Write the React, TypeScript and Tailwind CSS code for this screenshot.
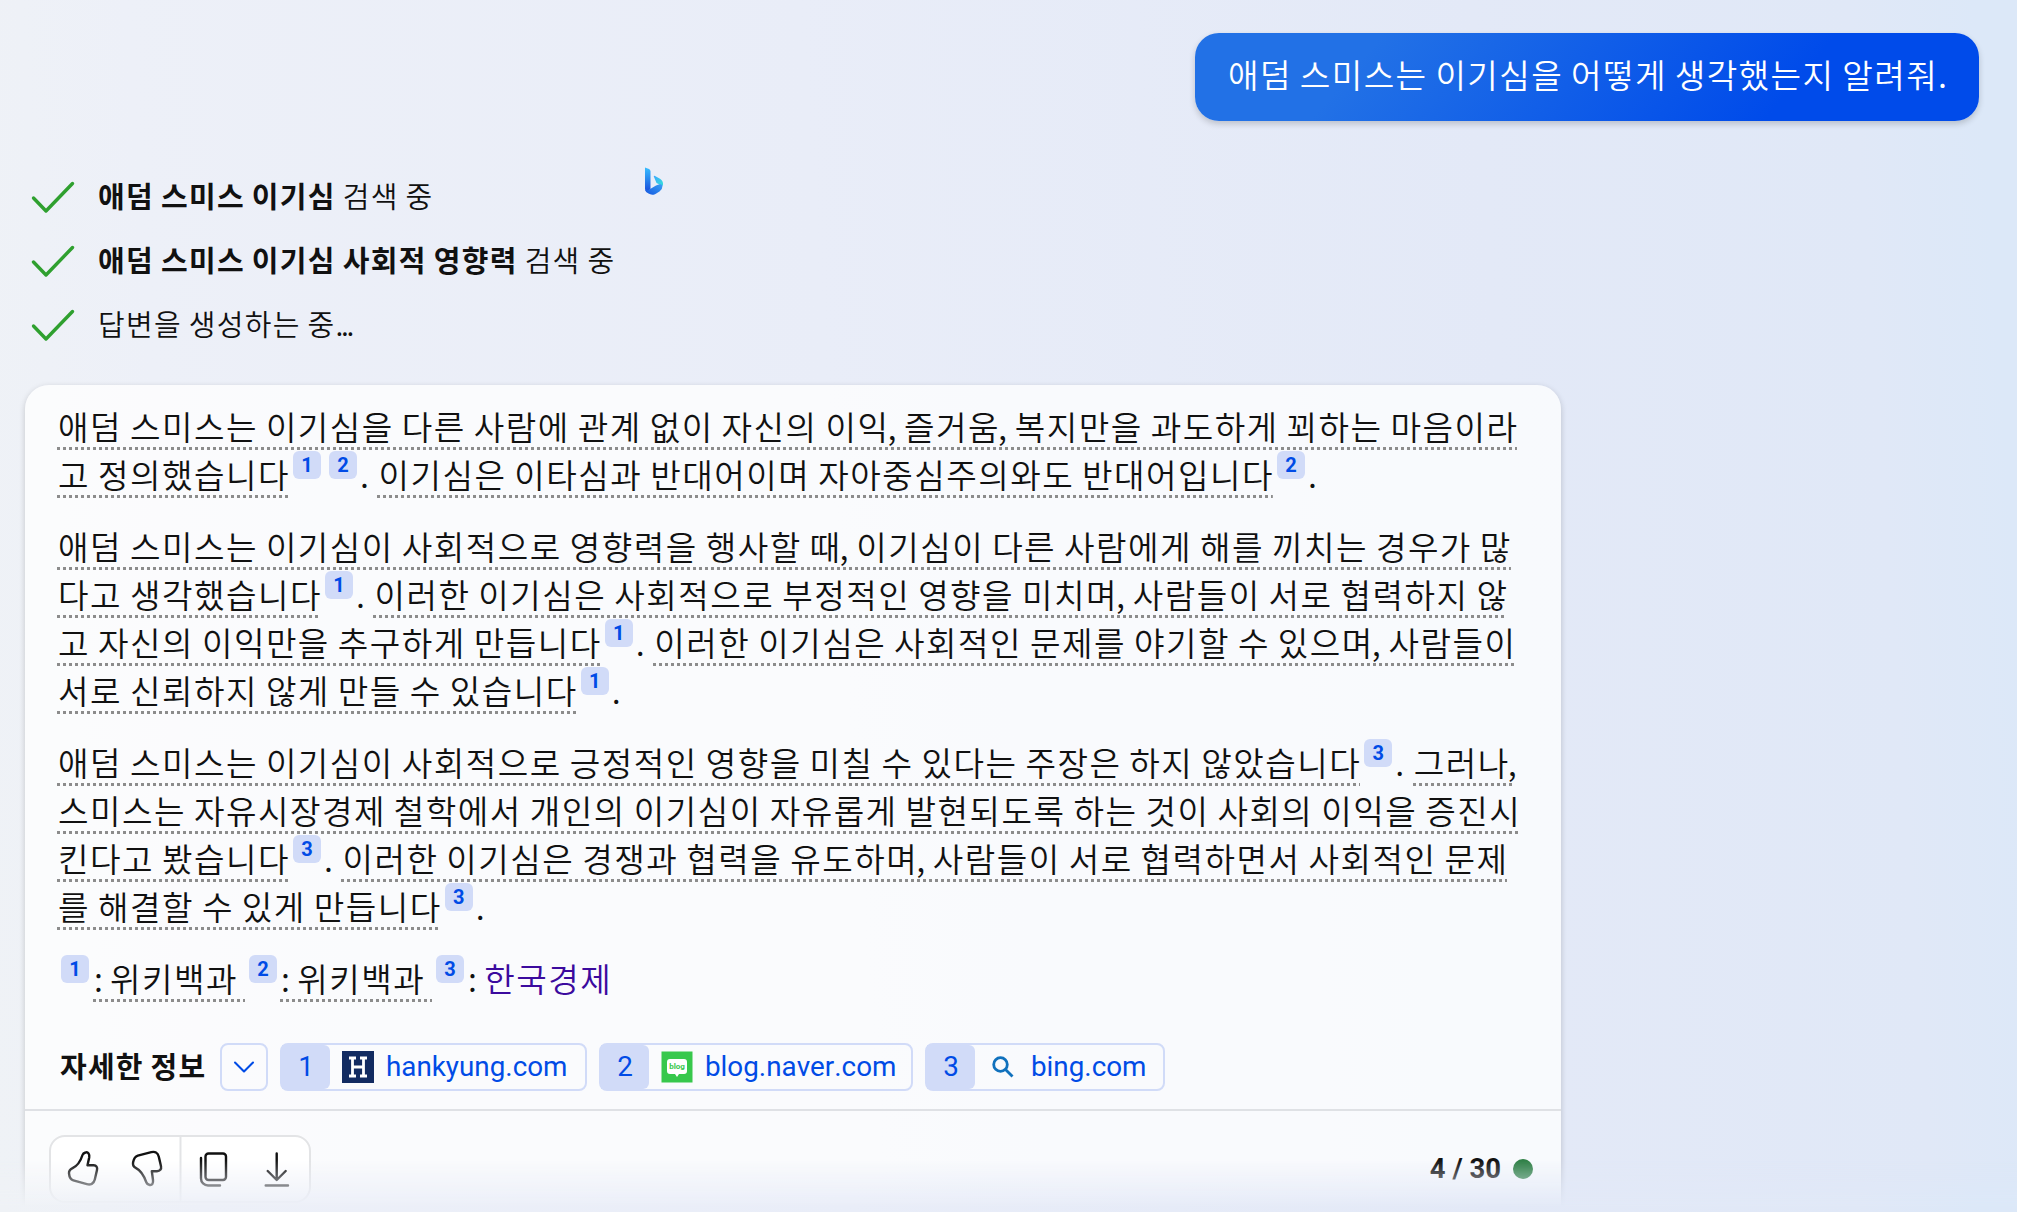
import type { ReactNode } from "react";
import { LuChevronDown } from "react-icons/lu";

const KR = "font-['Noto_Sans_CJK_KR',sans-serif] [font-kerning:none]";
const PAGE_BG = "bg-[linear-gradient(86deg,#eff2f6_0%,#edf0f8_10%,#e9edf8_42%,#e3e9f7_74%,#e0e8f7_92%,#dce8f8_98%)]";

type Seg = { t?: string; cite?: string[]; plain?: string };

const paragraphs: Seg[][][] = [
  [
    [{ t: "애덤 스미스는 이기심을 다른 사람에 관계 없이 자신의 이익, 즐거움, 복지만을 과도하게 꾀하는 마음이라" }],
    [{ t: "고 정의했습니다" }, { cite: ["1", "2"] }, { plain: "." }, { t: "이기심은 이타심과 반대어이며 자아중심주의와도 반대어입니다" }, { cite: ["2"] }, { plain: "." }],
  ],
  [
    [{ t: "애덤 스미스는 이기심이 사회적으로 영향력을 행사할 때, 이기심이 다른 사람에게 해를 끼치는 경우가 많" }],
    [{ t: "다고 생각했습니다" }, { cite: ["1"] }, { plain: "." }, { t: "이러한 이기심은 사회적으로 부정적인 영향을 미치며, 사람들이 서로 협력하지 않" }],
    [{ t: "고 자신의 이익만을 추구하게 만듭니다" }, { cite: ["1"] }, { plain: "." }, { t: "이러한 이기심은 사회적인 문제를 야기할 수 있으며, 사람들이" }],
    [{ t: "서로 신뢰하지 않게 만들 수 있습니다" }, { cite: ["1"] }, { plain: "." }],
  ],
  [
    [{ t: "애덤 스미스는 이기심이 사회적으로 긍정적인 영향을 미칠 수 있다는 주장은 하지 않았습니다" }, { cite: ["3"] }, { plain: "." }, { t: "그러나," }],
    [{ t: "스미스는 자유시장경제 철학에서 개인의 이기심이 자유롭게 발현되도록 하는 것이 사회의 이익을 증진시" }],
    [{ t: "킨다고 봤습니다" }, { cite: ["3"] }, { plain: "." }, { t: "이러한 이기심은 경쟁과 협력을 유도하며, 사람들이 서로 협력하면서 사회적인 문제" }],
    [{ t: "를 해결할 수 있게 만듭니다" }, { cite: ["3"] }, { plain: "." }],
  ],
];

function Check() {
  return (
    <svg className="mt-0.5 -ml-px" width="44" height="34" viewBox="0 0 44 34" fill="none" stroke="#2fa02f" strokeWidth="3.4" strokeLinecap="round" strokeLinejoin="round">
      <path d="M2.500 18 L15 31 L41.500 3.500" />
    </svg>
  );
}

function Cite({ n }: { n: string }) {
  return (
    <span className="-mt-[1px] flex h-7 w-7 items-center justify-center rounded-md bg-[#d1dbf8] font-['Roboto',sans-serif] text-[20px] leading-none font-bold tracking-normal text-[#004be6]">{n}</span>
  );
}

// text sits a little above the centre of its row, the dots hug the row's bottom
function Dotted({ children }: { children: ReactNode }) {
  return (
    <span className="h-[46px] shrink-0 bg-[repeating-linear-gradient(90deg,#8c8c8c_0_3px,transparent_3px_6px)] bg-[length:100%_3px] bg-bottom bg-no-repeat">
      <span className="relative -top-0.5 left-px">{children}</span>
    </span>
  );
}

function Line({ segs }: { segs: Seg[] }) {
  return (
    <div className="flex h-12 whitespace-nowrap">
      {segs.map((s, i) => {
        if (s.t)
          return (
            <Dotted key={i}>
              {s.t.split(/(,)/).map((p, k) => (p === "," ? <span key={k} className="-ml-[2px] tracking-[-0.3px]">,</span> : p))}
            </Dotted>
          );
        if (s.cite) return <span key={i} className="ml-[4px] flex gap-2">{s.cite.map((n) => <Cite key={n} n={n} />)}</span>;
        return <span key={i} className="relative -top-0.5 w-[20.5px] pl-[3px]">{s.plain}</span>;
      })}
    </div>
  );
}

function Step({ bold, children }: { bold?: string; children: ReactNode }) {
  return (
    <div className="flex h-16 items-center gap-[23px]">
      <Check />
      <div className="relative -top-[1.5px] text-[29px] leading-8 font-[350] tracking-[1.3px] [word-spacing:-0.9px]">
        {bold && <b className="font-bold">{bold} </b>}
        {children}
      </div>
    </div>
  );
}

function Chip({ n, host, icon, className }: { n: string; host: string; icon: ReactNode; className: string }) {
  return (
    <div className={`flex h-12 items-center rounded-lg border-2 border-[#d1dbf8] font-['Roboto',sans-serif] text-[27.8px] text-[#004be6] ${className}`}>
      <span className="flex h-full w-12 items-center justify-center rounded-r-md bg-[#d1dbf8]">{n}</span>
      <span className="mr-3 ml-3 flex h-8 w-8 items-center justify-center">{icon}</span>
      {host}
    </div>
  );
}

const HankyungIcon = () => (
  <svg width="32" height="32" viewBox="0 0 32 32">
    <rect width="32" height="32" fill="#122b61" />
    <path d="M7 7h7M7 25h7M18 7h7M18 25h7M10.500 7v18M21.500 7v18M10.500 16h11" stroke="#fff" strokeWidth="2.800" />
  </svg>
);

const NaverIcon = () => (
  <svg width="32" height="32" viewBox="0 0 32 32">
    <rect x="0.500" y="0.500" width="31" height="31" fill="#37c84c" />
    <path d="M9 8h14a3 3 0 0 1 3 3v9a3 3 0 0 1-3 3h-5l-2 3-2-3H9a3 3 0 0 1-3-3v-9a3 3 0 0 1 3-3z" fill="#fff" />
    <text x="16" y="18" textAnchor="middle" fontSize="8" fontWeight="700" fontFamily="Roboto" fill="#37c84c">blog</text>
  </svg>
);

const SearchIcon = () => (
  <svg width="32" height="32" viewBox="0 0 32 32" fill="none" stroke="#1071bd" strokeWidth="2.800">
    <circle cx="13.500" cy="13.500" r="6.800" />
    <path d="M18.500 18.500 L25.500 25.500" />
  </svg>
);

function BingLogo() {
  return (
    <svg width="20" height="28" viewBox="0 0 20 28">
      <defs>
        <linearGradient id="stem" x1="0" y1="0" x2="0" y2="1">
          <stop offset="0" stopColor="#37bdff" />
          <stop offset="1" stopColor="#1748da" />
        </linearGradient>
        <linearGradient id="bowl" x1="0" y1="1" x2="1" y2="0">
          <stop offset="0" stopColor="#1456e0" />
          <stop offset="1" stopColor="#3ba5f5" />
        </linearGradient>
        <linearGradient id="tip" x1="0" y1="0" x2="1" y2="1">
          <stop offset="0" stopColor="#3aa8ff" />
          <stop offset="1" stopColor="#36e0d8" />
        </linearGradient>
      </defs>
      <path d="M1 0.500 L5 2 Q6.500 2.800 6.500 4.500 V22 L3 25.500 Q1 24 1 21.500 Z" fill="url(#stem)" />
      <path d="M1 21 Q1.500 24 4.500 23 L12 18.500 L18.500 16 Q19.500 21 15.500 24.500 L11 27.200 Q7.500 28.500 4.500 26.600 Q1 24.500 1 21 Z" fill="url(#bowl)" />
      <path d="M9.800 9.500 Q9.500 8.500 11 9 L16 11.800 Q19.500 14 19 18.500 Q17.500 16.600 14.500 17 L12.500 16 Z" fill="url(#tip)" />
    </svg>
  );
}

function Actions() {
  return (
    <div className="flex h-[68px] w-[262px] rounded-2xl border-2 border-[#e3e4e6] bg-white">
      <svg width="258" height="64" viewBox="0 0 258 64" fill="none" stroke="#111" strokeWidth="2.400" strokeLinejoin="round" strokeLinecap="round">
        <path d="M34.500 15.500 c2.500-1 4.300 1.800 3.700 5 l-1.700 7.800 h6.200 c2.600 0 3.900 2.100 3.300 4.700 l-2.200 9.500 c-1 4.300-4.300 5.800-8 4.700 l-13.500-3.800 c-3-0.900-4-3.600-4.300-7 c-0.200-2.600 1.200-4.100 3.600-5.200 c5.200-2.500 8.200-7.800 9.900-13.200 c0.500-1.500 1.300-2 3-2.500z" />
        <path d="M98.700 48 c2.500 0.500 3.700-1.800 3.300-5 l-1.200-8.800 h5.200 c3 0 4.600-2 4-5 l-2.200-9.500 c-1-4.300-4-5.400-7.500-4.500 l-13.500 3.500 c-3 0.900-4 3.200-4.700 6.600 c-0.500 2.600 0.200 4.500 2.600 5.600 c5.200 2.500 8.500 8.500 10.700 14.600 c0.500 1.500 1.300 2.100 3.300 2.500z" />
        <path d="M129.500 0v64" stroke="#e3e4e6" strokeWidth="2" strokeLinecap="butt" />
        <rect x="154.500" y="16.500" width="20.500" height="26.500" rx="3" />
        <path d="M150 21 v20.500 a7 7 0 0 0 7 7 h12" />
        <path d="M225.700 16.500 V42 M216.700 34 L225.700 43 L234.700 34 M214.700 48.500 H237" />
      </svg>
    </div>
  );
}

export default function App() {
  return (
    <div className={`relative h-[1212px] w-[2017px] overflow-hidden text-[#111] ${PAGE_BG} ${KR}`}>
      <div className="flex justify-end pt-[33px] pr-[38px]">
        <div className="flex h-[88px] w-[784px] items-center rounded-[24px] bg-[linear-gradient(130deg,#2271e6_22%,#004bea_75%)] pb-1.5 pl-[33px] text-[33.2px] font-[350] tracking-[1.4px] whitespace-nowrap text-white shadow-[0_3px_6px_rgba(0,0,0,0.18)] [word-spacing:-0.9px]">
          애덤 스미스는 이기심을 어떻게 생각했는지 알려줘.
        </div>
      </div>

      <div className="mt-[43px] flex h-48 pl-[32px]">
        <div className="w-[612px]">
          <Step bold="애덤 스미스 이기심">검색 중</Step>
          <Step bold="애덤 스미스 이기심 사회적 영향력">검색 중</Step>
          <Step>
            답변을 생성하는 중<span className="tracking-[-2.3px]">...</span>
          </Step>
        </div>
        <div className="pt-[3px]">
          <BingLogo />
        </div>
      </div>

      <div className="mt-[29px] ml-[25px] h-[860px] w-[1536px] rounded-[24px] bg-white/75 pt-[19px] shadow-[0_2px_6px_rgba(0,0,0,0.18)]">
        <div className="flex flex-col gap-6 pl-8 text-[33.2px] leading-[48px] font-[350] tracking-[1.46px] [word-spacing:-0.9px]">
          {paragraphs.map((lines, i) => (
            <div key={i}>
              {lines.map((segs, j) => (
                <Line key={j} segs={segs} />
              ))}
            </div>
          ))}
          <div className="flex h-12 whitespace-nowrap">
            <span className="w-1" />
            <Cite n="1" />
            <span className="w-1" />
            <Dotted><span className="tracking-[-0.8px]">:</span> 위키백과&nbsp;</Dotted>
            <span className="w-1" />
            <Cite n="2" />
            <span className="w-[3px]" />
            <Dotted><span className="tracking-[-0.8px]">:</span> 위키백과&nbsp;</Dotted>
            <span className="w-1" />
            <Cite n="3" />
            <span className="relative -top-0.5 ml-1">
              <span className="tracking-[-0.8px]">:</span> <span className="text-[#3b0a9e]">한국경제</span>
            </span>
          </div>
        </div>

        <div className="mt-[39px] flex h-12 items-center gap-3 pl-[35px]">
          <span className="w-[148px] pb-0.5 text-[29px] font-bold tracking-[1.2px] whitespace-nowrap [word-spacing:-0.9px]">자세한 정보</span>
          <span className="flex h-12 w-12 items-center justify-center rounded-lg border-2 border-[#d1dbf8] text-[#004be6]">
            <LuChevronDown className="shrink-0" size={36} strokeWidth={1.4} />
          </span>
          <Chip n="1" host="hankyung.com" icon={<HankyungIcon />} className="w-[307px]" />
          <Chip n="2" host="blog.naver.com" icon={<NaverIcon />} className="w-[314px]" />
          <Chip n="3" host="bing.com" icon={<SearchIcon />} className="w-[240px]" />
        </div>

        <div className="mt-[18px] flex h-[130px] items-start justify-between border-t-2 border-[#dfe1e5] pt-6 pr-7 pl-6">
          <Actions />
          <div className="flex h-[68px] items-center gap-3 font-['Roboto',sans-serif] text-[27.5px] font-bold">
            4 / 30
            <span className="h-5 w-5 rounded-full bg-[#2f8046]" />
          </div>
        </div>
      </div>

      {/* fade over the bottom of the scrolled card */}
      <div className={`absolute bottom-0 left-0 h-[52px] w-full [mask-image:linear-gradient(to_bottom,transparent,black_90%)] ${PAGE_BG}`} />
    </div>
  );
}
